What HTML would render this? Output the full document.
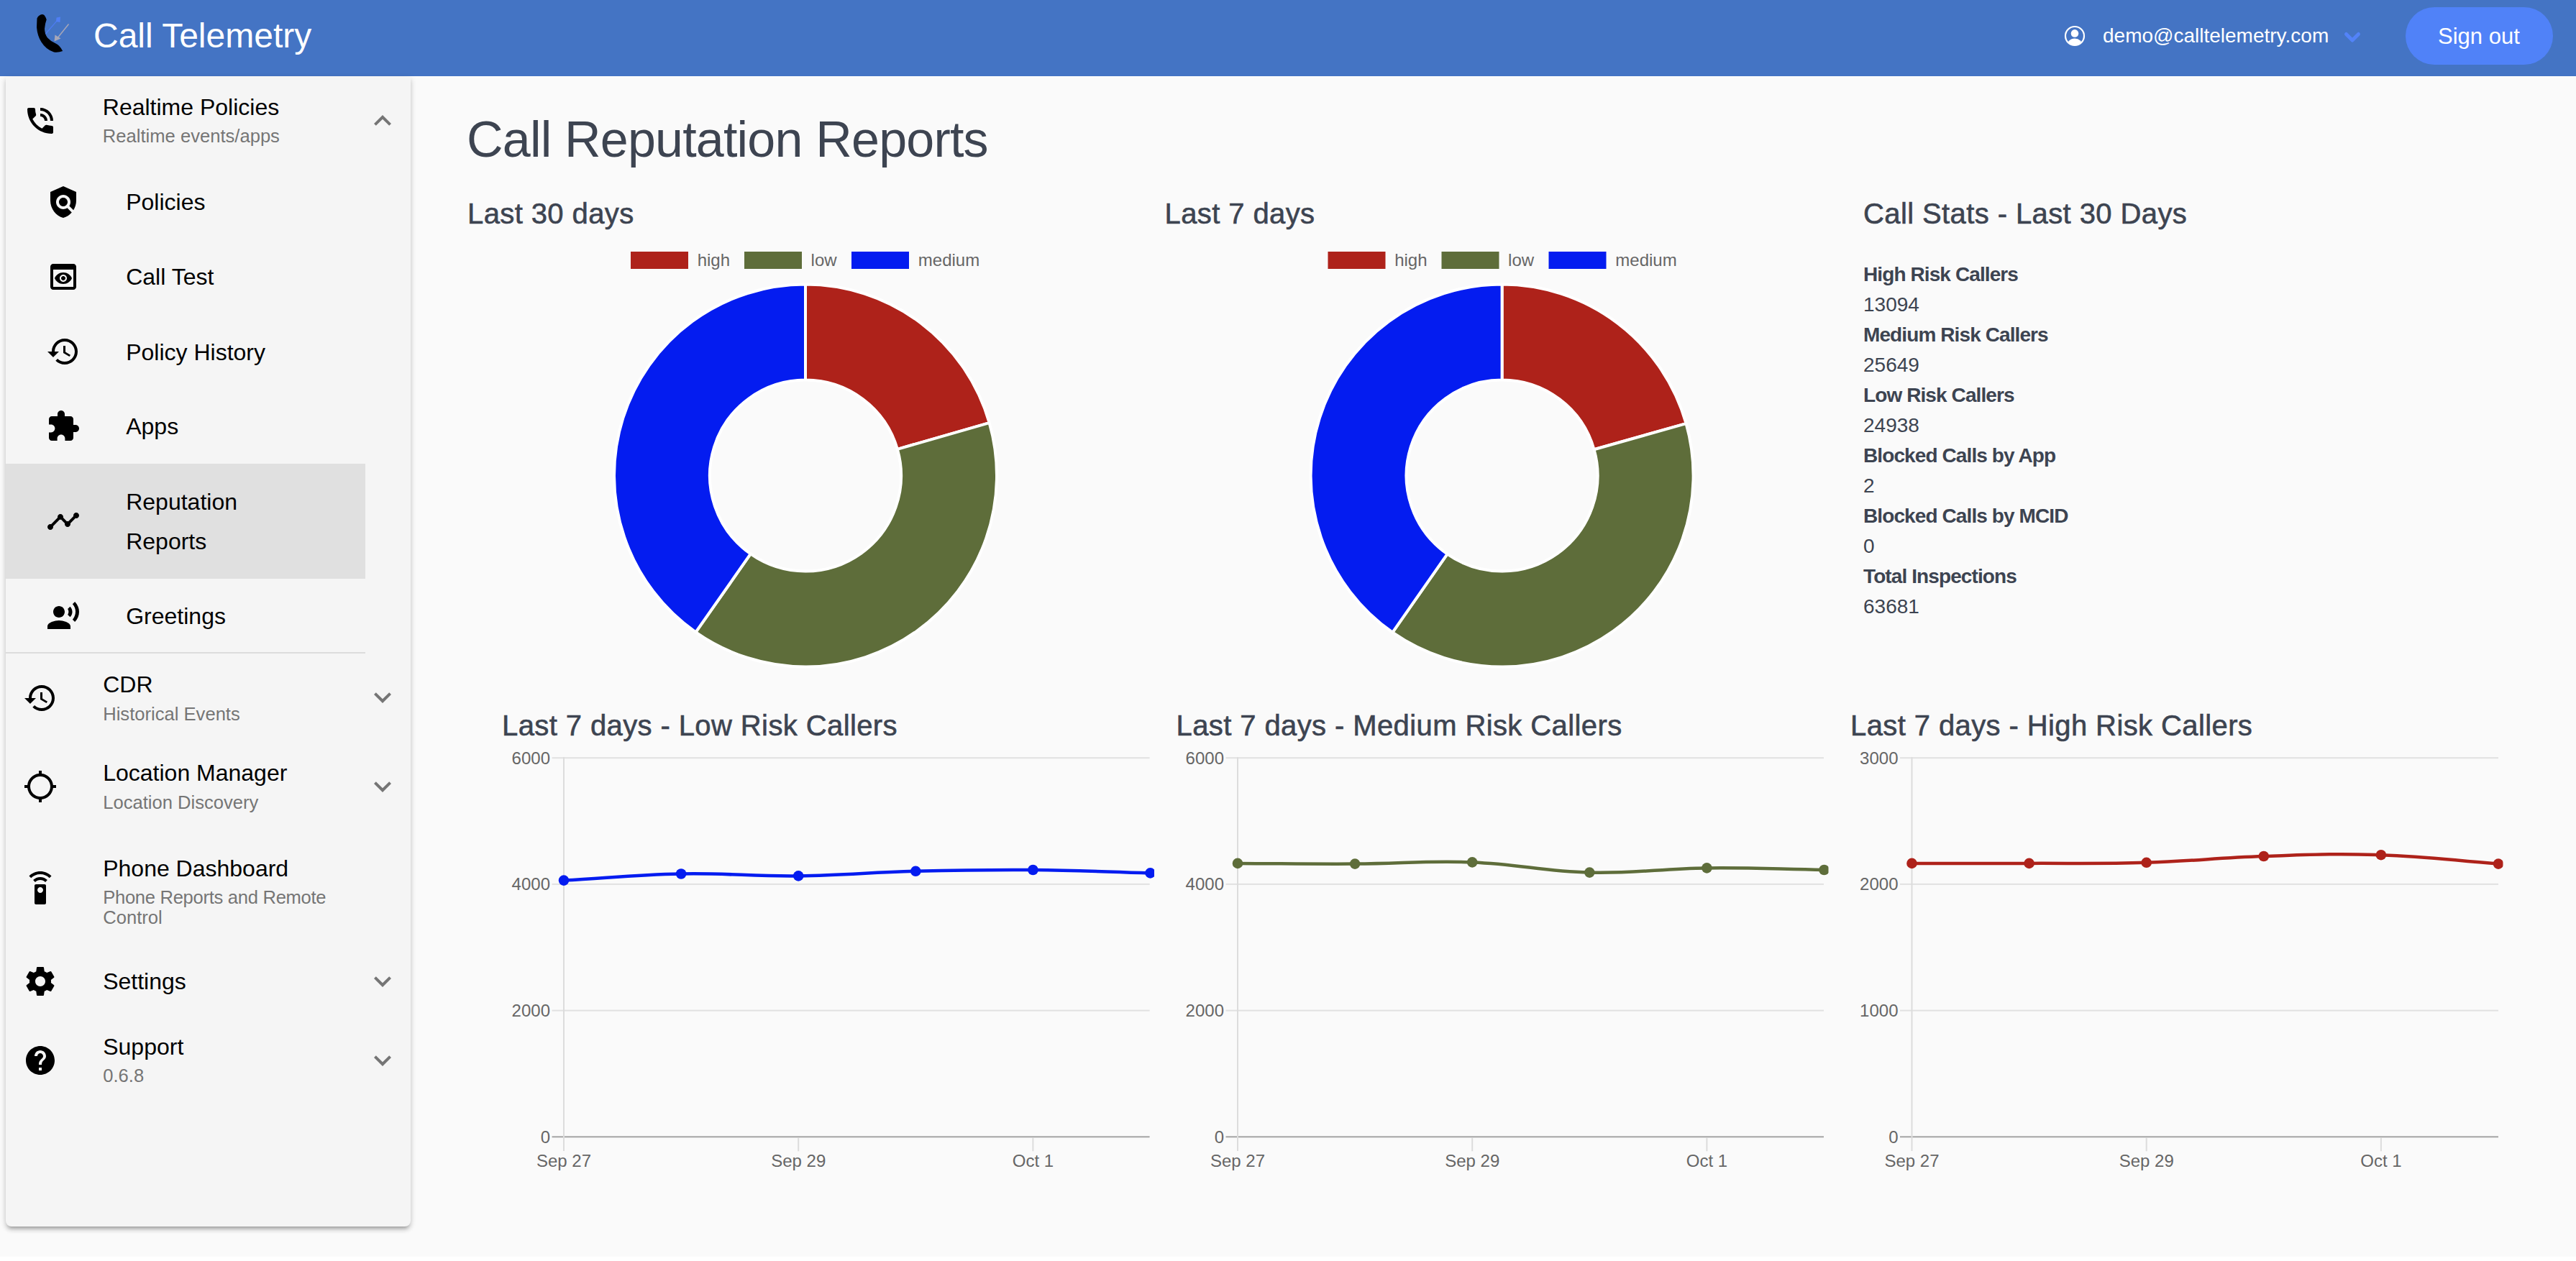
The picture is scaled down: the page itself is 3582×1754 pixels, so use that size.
<!DOCTYPE html>
<html><head><meta charset="utf-8"><title>Call Reputation Reports</title>
<style>
html,body{margin:0;padding:0;width:3582px;height:1754px;overflow:hidden;background:#fff;font-family:"Liberation Sans", sans-serif;}
.t{position:absolute;white-space:nowrap;line-height:1;}
.ic{position:absolute;overflow:visible;}
.lg{font-family:"Liberation Sans", sans-serif;font-size:24px;fill:#666;}
.ax{font-family:"Liberation Sans", sans-serif;font-size:24px;fill:#666;}
</style></head><body>
<div style="position:absolute;left:0;top:0;width:3582px;height:1748px;background:#fafafa"></div>
<div style="position:absolute;left:0;top:0;width:3582px;height:106px;background:#4474c4"></div>
<div style="position:absolute;left:0;top:106px;width:3582px;height:1px;background:#fff"></div>
<svg class="ic" style="left:40px;top:10px;width:70px;height:70px" viewBox="40 10 70 70">
<path fill="#000" d="M51.5 25.5 Q54 20 59.5 20 L61.5 21 Q63.5 23.5 64.7 27.2 Q62.5 33 62 40 Q62 47 66 52.5 Q71 58 78 60.8 Q83 63 87.2 71 Q81 73.5 75 72.5 Q64 69 57.5 58.5 Q52 50 51 38 Z"/>
<path stroke="#4d7cf0" stroke-width="1.3" fill="none" d="M63.5 47 L80 28"/><path fill="#4f7ff5" d="M78.5 24.5 L84 23.5 L83.5 31 L78 30 Z"/>
<path stroke="#a7a7b8" stroke-width="1.5" fill="none" d="M95.5 33.5 L79 54"/><path fill="#a7a7b8" d="M76.5 48.5 L84.5 53.5 L75.5 57.5 Z"/>
</svg>
<div class="t" style="left:130.0px;top:26.4px;font-size:48px;color:#fff;font-weight:400;">Call Telemetry</div>
<svg class="ic" style="left:2869px;top:34px;width:32px;height:32px" viewBox="2869 34 32 32">
<defs><clipPath id="uc"><circle cx="2885" cy="50" r="13"/></clipPath></defs>
<circle cx="2885" cy="50" r="13" fill="none" stroke="#fff" stroke-width="2.2"/>
<circle cx="2885" cy="46.4" r="5.3" fill="#fff"/>
<ellipse cx="2885" cy="64" rx="11" ry="10.5" fill="#fff" clip-path="url(#uc)"/>
</svg>
<div class="t" style="left:2924.0px;top:35.5px;font-size:28px;color:#fff;font-weight:400;">demo@calltelemetry.com</div>
<svg class="ic" style="left:3250px;top:36px;width:40px;height:30px" viewBox="3250 36 40 30"><path d="M3262.5 47.5 L3271 56 L3279.5 47.5" fill="none" stroke="#5383f8" stroke-width="5" stroke-linecap="round" stroke-linejoin="round"/></svg>
<div style="position:absolute;left:3345px;top:10px;width:205px;height:80px;border-radius:40px;background:#5082f8"></div>
<div class="t" style="left:3390.0px;top:34.5px;font-size:31px;color:#fff;font-weight:400;">Sign out</div>
<div style="position:absolute;left:8px;top:107px;width:563px;height:1599px;background:#f5f5f5;border-radius:0 0 8px 8px;box-shadow:0 6px 4px -4px rgba(0,0,0,.2),0 5px 6px 0 rgba(0,0,0,.14),0 2px 10px 0 rgba(0,0,0,.12)"></div>
<div style="position:absolute;left:8px;top:645px;width:500px;height:160px;background:#e0e0e0"></div>
<div style="position:absolute;left:8px;top:907px;width:500px;height:2px;background:#dcdcdc"></div>
<svg class="ic" style="left:32px;top:144px;width:48px;height:48px;" viewBox="0 0 24 24"><path fill="#000" d="M15 12h2c0-2.76-2.24-5-5-5v2c1.66 0 3 1.34 3 3zm4 0h2c0-4.97-4.03-9-9-9v2c3.87 0 7 3.13 7 7zm1 3.5c-1.25 0-2.45-.2-3.57-.57-.1-.03-.21-.05-.31-.05-.26 0-.51.1-.71.29l-2.2 2.2c-2.83-1.44-5.15-3.75-6.59-6.59l2.2-2.21c.28-.26.36-.65.25-1C8.7 6.45 8.5 5.25 8.5 4c0-.55-.45-1-1-1H4c-.55 0-1 .45-1 1 0 9.39 7.61 17 17 17 .55 0 1-.45 1-1v-3.5c0-.55-.45-1-1-1z"/></svg>
<div class="t" style="left:142.8px;top:133.2px;font-size:32px;color:#000;font-weight:400;">Realtime Policies</div>
<div class="t" style="left:142.8px;top:177.3px;font-size:25.6px;color:#757575;font-weight:400;">Realtime events/apps</div>
<svg class="ic" style="left:508px;top:144px;width:48px;height:48px;" viewBox="0 0 24 24"><path fill="#757575" d="M12 8l-6 6 1.41 1.41L12 10.83l4.59 4.58L18 14z"/></svg>
<svg class="ic" style="left:64px;top:257px;width:48px;height:48px;" viewBox="0 0 24 24"><path fill="#000" d="M21 5l-9-4-9 4v6c0 5.55 3.84 10.74 9 12 2.3-.56 4.33-1.9 5.88-3.71l-3.12-3.12c-1.94 1.29-4.58 1.07-6.29-.64-1.95-1.95-1.95-5.12 0-7.07 1.95-1.95 5.12-1.95 7.07 0 1.71 1.71 1.92 4.35.64 6.29l2.9 2.9C20.29 15.69 21 13.38 21 11V5zM12 15c1.66 0 3-1.34 3-3s-1.34-3-3-3-3 1.34-3 3 1.34 3 3 3z"/></svg>
<div class="t" style="left:175.2px;top:264.9px;font-size:32px;color:#000;font-weight:400;">Policies</div>
<svg class="ic" style="left:64px;top:360.5px;width:48px;height:48px;" viewBox="0 0 24 24"><path fill="#000" d="M19 3H5c-1.11 0-2 .9-2 2v14c0 1.1.89 2 2 2h14c1.1 0 2-.9 2-2V5c0-1.1-.89-2-2-2zm0 16H5V7h14v12zm-5.5-6c0 .83-.67 1.5-1.5 1.5s-1.5-.67-1.5-1.5.67-1.5 1.5-1.5 1.5.67 1.5 1.5zM12 9c-2.73 0-5.06 1.66-6 4 .94 2.34 3.27 4 6 4s5.06-1.66 6-4c-.94-2.34-3.27-4-6-4zm0 6.5c-1.38 0-2.5-1.12-2.5-2.5s1.12-2.5 2.5-2.5 2.5 1.12 2.5 2.5-1.12 2.5-2.5 2.5z"/></svg>
<div class="t" style="left:175.2px;top:368.9px;font-size:32px;color:#000;font-weight:400;">Call Test</div>
<svg class="ic" style="left:64px;top:465px;width:48px;height:48px;" viewBox="0 0 24 24"><path fill="#000" d="M13 3c-4.97 0-9 4.03-9 9H1l3.89 3.89.07.14L9 12H6c0-3.87 3.13-7 7-7s7 3.13 7 7-3.13 7-7 7c-1.93 0-3.68-.79-4.94-2.06l-1.42 1.42C8.27 19.99 10.51 21 13 21c4.97 0 9-4.03 9-9s-4.03-9-9-9zm-1 5v5l4.28 2.54.72-1.21-3.5-2.08V8H12z"/></svg>
<div class="t" style="left:175.2px;top:474.4px;font-size:32px;color:#000;font-weight:400;">Policy History</div>
<svg class="ic" style="left:64px;top:569px;width:48px;height:48px;" viewBox="0 0 24 24"><path fill="#000" d="M20.5 11H19V7c0-1.1-.9-2-2-2h-4V3.5C13 2.12 11.88 1 10.5 1S8 2.12 8 3.5V5H4c-1.1 0-1.99.9-1.99 2v3.8H3.5c1.49 0 2.7 1.21 2.7 2.7s-1.21 2.7-2.7 2.7H2V20c0 1.1.9 2 2 2h3.8v-1.5c0-1.49 1.21-2.7 2.7-2.7 1.49 0 2.7 1.21 2.7 2.7V22H17c1.1 0 2-.9 2-2v-4h1.5c1.38 0 2.5-1.12 2.5-2.5S21.88 11 20.5 11z"/></svg>
<div class="t" style="left:175.2px;top:576.7px;font-size:32px;color:#000;font-weight:400;">Apps</div>
<svg class="ic" style="left:64px;top:700.7px;width:48px;height:48px;" viewBox="0 0 24 24"><path fill="#000" d="M23 8c0 1.1-.9 2-2 2-.18 0-.35-.02-.51-.07l-3.56 3.55c.05.16.07.34.07.52 0 1.1-.9 2-2 2s-2-.9-2-2c0-.18.02-.36.07-.52l-2.55-2.55c-.16.05-.34.07-.52.07s-.36-.02-.52-.07l-4.55 4.56c.05.16.07.33.07.51 0 1.1-.9 2-2 2s-2-.9-2-2 .9-2 2-2c.18 0 .35.02.51.07l4.56-4.55C8.02 9.36 8 9.18 8 9c0-1.1.9-2 2-2s2 .9 2 2c0 .18-.02.36-.07.52l2.55 2.55c.16-.05.34-.07.52-.07s.36.02.52.07l3.55-3.56C19.02 8.35 19 8.18 19 8c0-1.1.9-2 2-2s2 .9 2 2z"/></svg>
<div class="t" style="left:175.2px;top:681.9px;font-size:32px;color:#000;font-weight:400;">Reputation</div>
<div class="t" style="left:175.2px;top:737.2px;font-size:32px;color:#000;font-weight:400;">Reports</div>
<svg class="ic" style="left:64px;top:832.75px;width:48px;height:48px;" viewBox="0 0 24 24"><path fill="#000" d="M9 13c2.21 0 4-1.79 4-4s-1.79-4-4-4-4 1.79-4 4 1.79 4 4 4zm0 2c-2.67 0-8 1.34-8 4v2h16v-2c0-2.66-5.33-4-8-4zm7.76-9.64l-1.68 1.69c.84 1.18.84 2.71 0 3.89l1.68 1.69c2.02-2.02 2.02-5.07 0-7.27zM20.07 2l-1.63 1.63c2.77 3.02 2.77 7.56 0 10.74L20.07 16c3.9-3.89 3.91-9.95 0-14z"/></svg>
<div class="t" style="left:175.2px;top:840.9px;font-size:32px;color:#000;font-weight:400;">Greetings</div>
<svg class="ic" style="left:32px;top:947px;width:48px;height:48px;" viewBox="0 0 24 24"><path fill="#000" d="M13 3c-4.97 0-9 4.03-9 9H1l3.89 3.89.07.14L9 12H6c0-3.87 3.13-7 7-7s7 3.13 7 7-3.13 7-7 7c-1.93 0-3.68-.79-4.94-2.06l-1.42 1.42C8.27 19.99 10.51 21 13 21c4.97 0 9-4.03 9-9s-4.03-9-9-9zm-1 5v5l4.28 2.54.72-1.21-3.5-2.08V8H12z"/></svg>
<div class="t" style="left:143.2px;top:935.5px;font-size:32px;color:#000;font-weight:400;">CDR</div>
<div class="t" style="left:143.2px;top:980.6px;font-size:25.6px;color:#757575;font-weight:400;">Historical Events</div>
<svg class="ic" style="left:508px;top:946px;width:48px;height:48px;" viewBox="0 0 24 24"><path fill="#757575" d="M16.59 8.59L12 13.17 7.41 8.59 6 10l6 6 6-6z"/></svg>
<svg class="ic" style="left:32px;top:1070px;width:48px;height:48px;" viewBox="0 0 24 24"><path fill="#000" d="M20.94 11c-.46-4.17-3.77-7.48-7.94-7.94V1h-2v2.06C6.83 3.52 3.52 6.83 3.06 11H1v2h2.06c.46 4.17 3.77 7.48 7.94 7.94V23h2v-2.06c4.17-.46 7.48-3.77 7.94-7.94H23v-2h-2.06zM12 19c-3.87 0-7-3.13-7-7s3.13-7 7-7 7 3.13 7 7-3.13 7-7 7z"/></svg>
<div class="t" style="left:143.2px;top:1059.3px;font-size:32px;color:#000;font-weight:400;">Location Manager</div>
<div class="t" style="left:143.2px;top:1104.3px;font-size:25.6px;color:#757575;font-weight:400;">Location Discovery</div>
<svg class="ic" style="left:508px;top:1070px;width:48px;height:48px;" viewBox="0 0 24 24"><path fill="#757575" d="M16.59 8.59L12 13.17 7.41 8.59 6 10l6 6 6-6z"/></svg>
<svg class="ic" style="left:32px;top:1212px;width:48px;height:48px;" viewBox="0 0 24 24"><path fill="#000" d="M15 9H9c-.55 0-1 .45-1 1v12c0 .55.45 1 1 1h6c.55 0 1-.45 1-1V10c0-.55-.45-1-1-1zm-3 6c-1.1 0-2-.9-2-2s.9-2 2-2 2 .9 2 2-.9 2-2 2zM7.05 6.05l1.41 1.41C9.37 6.56 10.62 6 12 6s2.63.56 3.54 1.46l1.41-1.41C15.68 4.78 13.93 4 12 4s-3.68.78-4.95 2.05zM12 0C8.96 0 6.21 1.23 4.22 3.22l1.41 1.41C7.26 3.01 9.51 2 12 2s4.74 1.01 6.36 2.64l1.41-1.41C17.79 1.23 15.04 0 12 0z"/></svg>
<div class="t" style="left:143.2px;top:1192.1px;font-size:32px;color:#000;font-weight:400;">Phone Dashboard</div>
<div class="t" style="left:143.2px;top:1236.3px;font-size:25.6px;color:#757575;font-weight:400;letter-spacing:-0.3px;">Phone Reports and Remote</div>
<div class="t" style="left:143.2px;top:1263.7px;font-size:25.6px;color:#757575;font-weight:400;">Control</div>
<svg class="ic" style="left:32px;top:1341px;width:48px;height:48px;" viewBox="0 0 24 24"><path fill="#000" d="M19.43 12.98c.04-.32.07-.64.07-.98s-.03-.66-.07-.98l2.11-1.65c.19-.15.24-.42.12-.64l-2-3.46c-.12-.22-.39-.3-.61-.22l-2.49 1c-.52-.4-1.08-.73-1.69-.98l-.38-2.65C14.46 2.18 14.25 2 14 2h-4c-.25 0-.46.18-.49.42l-.38 2.65c-.61.25-1.17.59-1.69.98l-2.49-1c-.23-.09-.49 0-.61.22l-2 3.46c-.13.22-.07.49.12.64l2.11 1.65c-.04.32-.07.65-.07.98s.03.66.07.98l-2.11 1.65c-.19.15-.24.42-.12.64l2 3.46c.12.22.39.3.61.22l2.49-1c.52.4 1.08.73 1.69.98l.38 2.65c.03.24.24.42.49.42h4c.25 0 .46-.18.49-.42l.38-2.65c.61-.25 1.17-.59 1.69-.98l2.49 1c.23.09.49 0 .61-.22l2-3.46c.12-.22.07-.49-.12-.64l-2.11-1.65zM12 15.5c-1.93 0-3.5-1.57-3.5-3.5s1.57-3.5 3.5-3.5 3.5 1.57 3.5 3.5-1.57 3.5-3.5 3.5z"/></svg>
<div class="t" style="left:143.2px;top:1348.7px;font-size:32px;color:#000;font-weight:400;">Settings</div>
<svg class="ic" style="left:508px;top:1341px;width:48px;height:48px;" viewBox="0 0 24 24"><path fill="#757575" d="M16.59 8.59L12 13.17 7.41 8.59 6 10l6 6 6-6z"/></svg>
<svg class="ic" style="left:32px;top:1451px;width:48px;height:48px;" viewBox="0 0 24 24"><path fill="#000" d="M12 2C6.48 2 2 6.48 2 12s4.48 10 10 10 10-4.48 10-10S17.52 2 12 2zm1 17h-2v-2h2v2zm2.07-7.75l-.9.92C13.45 12.9 13 13.5 13 15h-2v-.5c0-1.1.45-2.1 1.17-2.83l1.24-1.26c.37-.36.59-.86.59-1.41 0-1.1-.9-2-2-2s-2 .9-2 2H8c0-2.21 1.79-4 4-4s4 1.79 4 4c0 .88-.36 1.68-.93 2.25z"/></svg>
<div class="t" style="left:143.2px;top:1439.6px;font-size:32px;color:#000;font-weight:400;">Support</div>
<div class="t" style="left:143.2px;top:1484.3px;font-size:25.6px;color:#757575;font-weight:400;">0.6.8</div>
<svg class="ic" style="left:508px;top:1451px;width:48px;height:48px;" viewBox="0 0 24 24"><path fill="#757575" d="M16.59 8.59L12 13.17 7.41 8.59 6 10l6 6 6-6z"/></svg>
<div class="t" style="left:649.0px;top:159.2px;font-size:70px;color:#3d4451;font-weight:400;letter-spacing:-0.8px;">Call Reputation Reports</div>
<div class="t" style="left:650.0px;top:277.1px;font-size:40px;color:#3d4451;font-weight:500;letter-spacing:0.4px;-webkit-text-stroke:0.6px #3d4451;">Last 30 days</div>
<div class="t" style="left:1619.5px;top:277.1px;font-size:40px;color:#3d4451;font-weight:500;letter-spacing:0.4px;-webkit-text-stroke:0.6px #3d4451;">Last 7 days</div>
<div class="t" style="left:2591.0px;top:277.1px;font-size:40px;color:#3d4451;font-weight:500;letter-spacing:0.4px;-webkit-text-stroke:0.6px #3d4451;">Call Stats - Last 30 Days</div>
<div class="t" style="left:2591.0px;top:368.3px;font-size:28px;color:#3d4451;font-weight:700;letter-spacing:-0.9px;">High Risk Callers</div>
<div class="t" style="left:2591.0px;top:410.3px;font-size:28px;color:#3d4451;font-weight:400;">13094</div>
<div class="t" style="left:2591.0px;top:452.3px;font-size:28px;color:#3d4451;font-weight:700;letter-spacing:-0.9px;">Medium Risk Callers</div>
<div class="t" style="left:2591.0px;top:494.3px;font-size:28px;color:#3d4451;font-weight:400;">25649</div>
<div class="t" style="left:2591.0px;top:536.3px;font-size:28px;color:#3d4451;font-weight:700;letter-spacing:-0.9px;">Low Risk Callers</div>
<div class="t" style="left:2591.0px;top:578.3px;font-size:28px;color:#3d4451;font-weight:400;">24938</div>
<div class="t" style="left:2591.0px;top:620.3px;font-size:28px;color:#3d4451;font-weight:700;letter-spacing:-0.9px;">Blocked Calls by App</div>
<div class="t" style="left:2591.0px;top:662.3px;font-size:28px;color:#3d4451;font-weight:400;">2</div>
<div class="t" style="left:2591.0px;top:704.3px;font-size:28px;color:#3d4451;font-weight:700;letter-spacing:-0.9px;">Blocked Calls by MCID</div>
<div class="t" style="left:2591.0px;top:746.3px;font-size:28px;color:#3d4451;font-weight:400;">0</div>
<div class="t" style="left:2591.0px;top:788.3px;font-size:28px;color:#3d4451;font-weight:700;letter-spacing:-0.9px;">Total Inspections</div>
<div class="t" style="left:2591.0px;top:830.3px;font-size:28px;color:#3d4451;font-weight:400;">63681</div>
<div class="t" style="left:698.0px;top:989.1px;font-size:40px;color:#3d4451;font-weight:500;letter-spacing:0.4px;-webkit-text-stroke:0.6px #3d4451;">Last 7 days - Low Risk Callers</div>
<div class="t" style="left:1635.5px;top:989.1px;font-size:40px;color:#3d4451;font-weight:500;letter-spacing:0.4px;-webkit-text-stroke:0.6px #3d4451;">Last 7 days - Medium Risk Callers</div>
<div class="t" style="left:2573.0px;top:989.1px;font-size:40px;color:#3d4451;font-weight:500;letter-spacing:0.4px;-webkit-text-stroke:0.6px #3d4451;">Last 7 days - High Risk Callers</div>
<svg class="ic" style="left:0;top:0;width:3582px;height:1754px" viewBox="0 0 3582 1754"><path d="M1120.00 395.50A266 266 0 0 1 1375.70 588.18L1247.85 624.84A133 133 0 0 0 1120.00 528.50Z" fill="#ae221a" stroke="#fff" stroke-width="4" stroke-linejoin="bevel"/><path d="M1375.70 588.18A266 266 0 0 1 967.43 879.39L1043.71 770.45A133 133 0 0 0 1247.85 624.84Z" fill="#5e6d3a" stroke="#fff" stroke-width="4" stroke-linejoin="bevel"/><path d="M967.43 879.39A266 266 0 0 1 1120.00 395.50L1120.00 528.50A133 133 0 0 0 1043.71 770.45Z" fill="#041cf0" stroke="#fff" stroke-width="4" stroke-linejoin="bevel"/><path d="M2088.60 395.50A266 266 0 0 1 2344.55 589.07L2216.57 625.29A133 133 0 0 0 2088.60 528.50Z" fill="#ae221a" stroke="#fff" stroke-width="4" stroke-linejoin="bevel"/><path d="M2344.55 589.07A266 266 0 0 1 1936.41 879.66L2012.50 770.58A133 133 0 0 0 2216.57 625.29Z" fill="#5e6d3a" stroke="#fff" stroke-width="4" stroke-linejoin="bevel"/><path d="M1936.41 879.66A266 266 0 0 1 2088.60 395.50L2088.60 528.50A133 133 0 0 0 2012.50 770.58Z" fill="#041cf0" stroke="#fff" stroke-width="4" stroke-linejoin="bevel"/><rect x="877" y="350" width="80" height="24" fill="#ae221a"/><text x="969.7" y="370" class="lg">high</text><rect x="1035" y="350" width="80" height="24" fill="#5e6d3a"/><text x="1127.6" y="370" class="lg">low</text><rect x="1184" y="350" width="80" height="24" fill="#041cf0"/><text x="1276.8" y="370" class="lg">medium</text><rect x="1846.5" y="350" width="80" height="24" fill="#ae221a"/><text x="1939.2" y="370" class="lg">high</text><rect x="2004.5" y="350" width="80" height="24" fill="#5e6d3a"/><text x="2097.1" y="370" class="lg">low</text><rect x="2153.5" y="350" width="80" height="24" fill="#041cf0"/><text x="2246.3" y="370" class="lg">medium</text><rect x="767.5" y="1053.2" width="831.0999999999999" height="2" fill="#e1e1e1"/><rect x="767.5" y="1228.9" width="831.0999999999999" height="2" fill="#e1e1e1"/><rect x="767.5" y="1404.6" width="831.0999999999999" height="2" fill="#e1e1e1"/><rect x="767.5" y="1580.3" width="831.0999999999999" height="2" fill="#a4a4a4"/><rect x="783" y="1053.2" width="2" height="547.8" fill="#dcdcdc"/><rect x="1109.2" y="1582.3" width="2" height="19" fill="#dcdcdc"/><rect x="1435.4" y="1582.3" width="2" height="19" fill="#dcdcdc"/><text x="765" y="1062.7" class="ax" text-anchor="end">6000</text><text x="765" y="1238.4" class="ax" text-anchor="end">4000</text><text x="765" y="1414.1" class="ax" text-anchor="end">2000</text><text x="765" y="1589.8" class="ax" text-anchor="end">0</text><text x="784.0" y="1623" class="ax" text-anchor="middle">Sep 27</text><text x="1110.2" y="1623" class="ax" text-anchor="middle">Sep 29</text><text x="1436.4" y="1623" class="ax" text-anchor="middle">Oct 1</text><clipPath id="cl784"><rect x="744" y="1000" width="861.1" height="700"/></clipPath><g clip-path="url(#cl784)"><path d="M784.00 1224.60C849.24 1220.96 881.81 1216.74 947.10 1215.50C1012.29 1214.26 1044.98 1219.14 1110.20 1218.40C1175.46 1217.66 1208.04 1213.48 1273.30 1211.80C1338.52 1210.12 1371.17 1209.48 1436.40 1210.00C1501.65 1210.52 1534.26 1212.64 1599.50 1214.40" fill="none" stroke="#041cf0" stroke-width="4.5"/><circle cx="784.0" cy="1224.6" r="7.3" fill="#041cf0"/><circle cx="947.1" cy="1215.5" r="7.3" fill="#041cf0"/><circle cx="1110.2" cy="1218.4" r="7.3" fill="#041cf0"/><circle cx="1273.3" cy="1211.8" r="7.3" fill="#041cf0"/><circle cx="1436.4" cy="1210.0" r="7.3" fill="#041cf0"/><circle cx="1599.5" cy="1214.4" r="7.3" fill="#041cf0"/></g><rect x="1704.5" y="1053.2" width="831.5" height="2" fill="#e1e1e1"/><rect x="1704.5" y="1228.9" width="831.5" height="2" fill="#e1e1e1"/><rect x="1704.5" y="1404.6" width="831.5" height="2" fill="#e1e1e1"/><rect x="1704.5" y="1580.3" width="831.5" height="2" fill="#a4a4a4"/><rect x="1720" y="1053.2" width="2" height="547.8" fill="#dcdcdc"/><rect x="2046.2" y="1582.3" width="2" height="19" fill="#dcdcdc"/><rect x="2372.4" y="1582.3" width="2" height="19" fill="#dcdcdc"/><text x="1702" y="1062.7" class="ax" text-anchor="end">6000</text><text x="1702" y="1238.4" class="ax" text-anchor="end">4000</text><text x="1702" y="1414.1" class="ax" text-anchor="end">2000</text><text x="1702" y="1589.8" class="ax" text-anchor="end">0</text><text x="1721.0" y="1623" class="ax" text-anchor="middle">Sep 27</text><text x="2047.2" y="1623" class="ax" text-anchor="middle">Sep 29</text><text x="2373.4" y="1623" class="ax" text-anchor="middle">Oct 1</text><clipPath id="cl1721"><rect x="1681" y="1000" width="861.5" height="700"/></clipPath><g clip-path="url(#cl1721)"><path d="M1721.00 1200.90C1786.24 1201.18 1818.86 1201.90 1884.10 1201.60C1949.34 1201.30 1982.08 1197.00 2047.20 1199.40C2112.56 1201.80 2144.96 1212.00 2210.30 1213.60C2275.44 1215.20 2308.14 1208.12 2373.40 1207.40C2438.62 1206.68 2471.26 1208.96 2536.50 1210.00" fill="none" stroke="#5e6d3a" stroke-width="4.5"/><circle cx="1721.0" cy="1200.9" r="7.3" fill="#5e6d3a"/><circle cx="1884.1" cy="1201.6" r="7.3" fill="#5e6d3a"/><circle cx="2047.2" cy="1199.4" r="7.3" fill="#5e6d3a"/><circle cx="2210.3" cy="1213.6" r="7.3" fill="#5e6d3a"/><circle cx="2373.4" cy="1207.4" r="7.3" fill="#5e6d3a"/><circle cx="2536.5" cy="1210.0" r="7.3" fill="#5e6d3a"/></g><rect x="2642.0" y="1053.2" width="832.0" height="2" fill="#e1e1e1"/><rect x="2642.0" y="1228.9" width="832.0" height="2" fill="#e1e1e1"/><rect x="2642.0" y="1404.6" width="832.0" height="2" fill="#e1e1e1"/><rect x="2642.0" y="1580.3" width="832.0" height="2" fill="#a4a4a4"/><rect x="2657.5" y="1053.2" width="2" height="547.8" fill="#dcdcdc"/><rect x="2983.7" y="1582.3" width="2" height="19" fill="#dcdcdc"/><rect x="3309.9" y="1582.3" width="2" height="19" fill="#dcdcdc"/><text x="2639.5" y="1062.7" class="ax" text-anchor="end">3000</text><text x="2639.5" y="1238.4" class="ax" text-anchor="end">2000</text><text x="2639.5" y="1414.1" class="ax" text-anchor="end">1000</text><text x="2639.5" y="1589.8" class="ax" text-anchor="end">0</text><text x="2658.5" y="1623" class="ax" text-anchor="middle">Sep 27</text><text x="2984.7" y="1623" class="ax" text-anchor="middle">Sep 29</text><text x="3310.9" y="1623" class="ax" text-anchor="middle">Oct 1</text><clipPath id="cl2658"><rect x="2618.5" y="1000" width="862.0" height="700"/></clipPath><g clip-path="url(#cl2658)"><path d="M2658.50 1200.90C2723.74 1200.90 2756.36 1201.12 2821.60 1200.90C2886.84 1200.68 2919.51 1201.78 2984.70 1199.80C3049.99 1197.82 3082.51 1193.12 3147.80 1191.00C3212.99 1188.88 3245.75 1187.08 3310.90 1189.20C3376.23 1191.32 3408.76 1196.64 3474.00 1201.60" fill="none" stroke="#ae221a" stroke-width="4.5"/><circle cx="2658.5" cy="1200.9" r="7.3" fill="#ae221a"/><circle cx="2821.6" cy="1200.9" r="7.3" fill="#ae221a"/><circle cx="2984.7" cy="1199.8" r="7.3" fill="#ae221a"/><circle cx="3147.8" cy="1191.0" r="7.3" fill="#ae221a"/><circle cx="3310.9" cy="1189.2" r="7.3" fill="#ae221a"/><circle cx="3474.0" cy="1201.6" r="7.3" fill="#ae221a"/></g></svg>
</body></html>
